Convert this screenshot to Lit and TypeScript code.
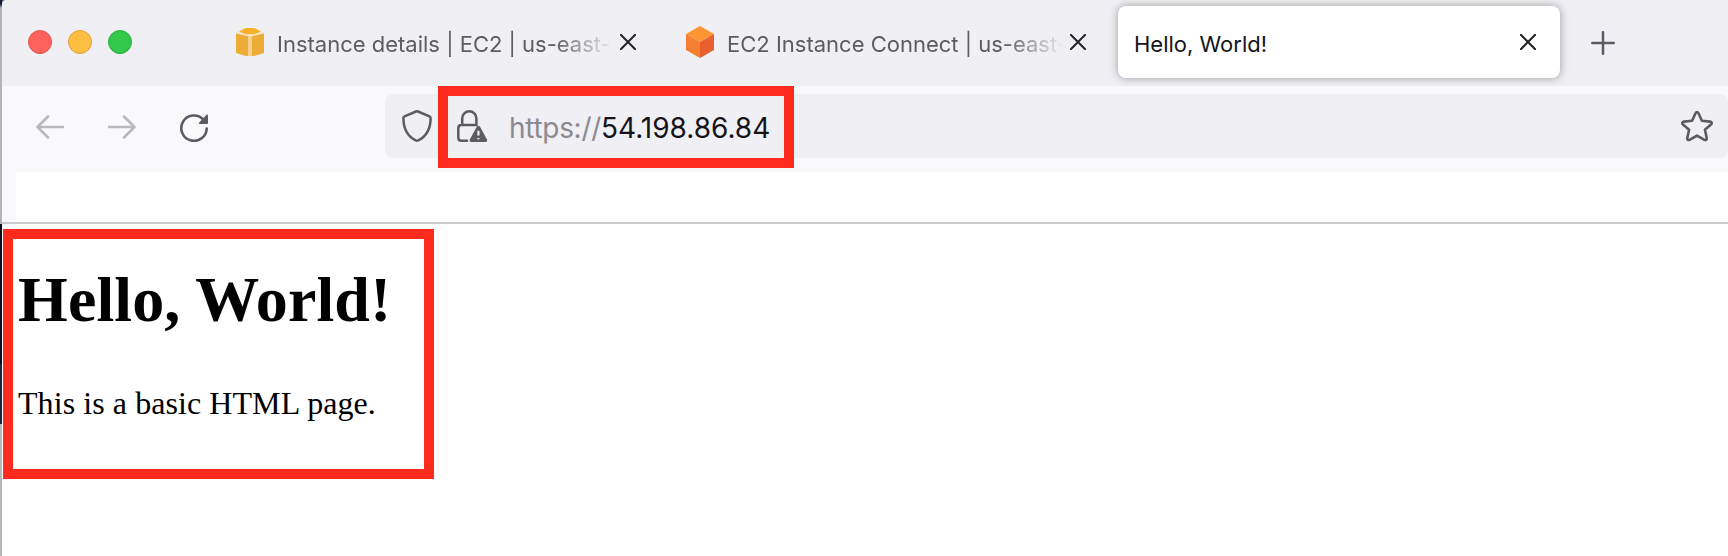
import { LitElement, html, css, svg } from "lit";
import { customElement, property } from "lit/decorators.js";

const ec2Legacy = html`<svg width="28" height="28" viewBox="0 0 28 28">
  <path d="M0 4.500 9 0H19L28 4.500V25L18 28H10L0 25Z" fill="#f5e6ca" />
  <path d="M3 3.600 10 0H18L25 3.600 18 6.200H10Z" fill="#f8b02a" />
  <path d="M0 5.400 12 8.300V28H10L0 25ZM28 5.400 16 8.300V28H18L28 25Z" fill="#edac36" />
  <path d="M12 8.300H16V28H12Z" fill="#f4cf8e" />
</svg>`;

const ec2Cube = html`<svg width="28" height="32" viewBox="0 0 28 32">
  <path d="M14 0 28 8 14 16 0 8Z" fill="#fd9535" />
  <path d="M0 8 14 16V32L0 24Z" fill="#f57f31" />
  <path d="M28 8 14 16V32L28 24Z" fill="#e8602d" />
</svg>`;

const closeIcon = html`<svg width="16" height="16" viewBox="0 0 16 16" fill="none" stroke="#242429" stroke-width="2" stroke-linecap="round">
  <path d="M.8.8 15.200 15.200M15.200.8.8 15.200" />
</svg>`;

const arrow = svg`<path d="M1.500 12H27M12 1.500 1.500 12 12 22.500" />`;

@customElement("browser-tab")
export class BrowserTab extends LitElement {
  @property() label = "";
  @property() icon = "";
  @property({ type: Boolean, reflect: true }) active = false;

  static styles = css`
    :host {
      box-sizing: border-box;
      display: flex;
      align-items: center;
      width: 442px;
      height: 72px;
      margin: 6px 0 0 8px;
      padding: 0 24px 0 16px;
      border-radius: 8px;
      color: #5d5d61;
      font: 22px/30px Inter, sans-serif;
    }
    :host([active]) {
      background: #fff;
      color: #15141a;
      box-shadow: 0 0 8px rgba(80, 80, 90, 0.55);
    }
    .icon {
      display: flex;
      width: 28px;
      margin: 0 13px 0 2px;
    }
    .label {
      flex: 1;
      min-width: 0;
      white-space: nowrap;
      padding-top: 3px;
    }
    .fade {
      margin-right: 6px;
      -webkit-mask-image: linear-gradient(to right, #000 calc(100% - 60px), transparent);
      mask-image: linear-gradient(to right, #000 calc(100% - 60px), transparent);
    }
    .close { display: flex; }
  `;

  render() {
    return html`
      ${this.icon
        ? html`<span class="icon">${this.icon === "cube" ? ec2Cube : ec2Legacy}</span>`
        : null}
      <span class="label ${this.active ? "" : "fade"}">${this.label}</span>
      <span class="close">${closeIcon}</span>
    `;
  }
}

@customElement("app-root")
export class AppRoot extends LitElement {
  static styles = css`
    :host {
      display: flex;
      box-sizing: border-box;
      width: 1728px;
      height: 556px;
      overflow: hidden;
      background: #fff;
    }
    .edge {
      flex: none;
      width: 2px;
      background: linear-gradient(#141d33 0 4px, #b4b4b6 8px 224px, #0c0b16 224px 364px, #22233a 364px 424px, #b7b7b9 424px);
    }
    .window { flex: 1; min-width: 0; display: flex; flex-direction: column; }
    .tabs {
      display: flex;
      align-items: flex-start;
      height: 86px;
      background: radial-gradient(circle at 6px 6px, #f0eff4 6px, #a9abb3 7px, #141d33 8px) 0 0 / 5px 5px no-repeat, #f0eff4;
    }
    .lights { display: flex; gap: 16px; padding: 30px 78px 0 26px; }
    .light {
      box-sizing: border-box;
      width: 24px;
      height: 24px;
      border-radius: 50%;
      border: 1px solid;
    }
    .red { background: #fe625c; border-color: #e2524d; }
    .yellow { background: #fdbe41; border-color: #df9f3a; }
    .green { background: #35c94b; border-color: #28ac38; }
    browser-tab { flex: none; }
    .plus { display: flex; margin: 31px 0 0 31px; }
    .toolbar {
      display: flex;
      align-items: flex-start;
      height: 86px;
      background: #f9f9fb;
    }
    .nav { display: flex; gap: 44px; padding: 28px 0 0 34px; width: 349px; }
    .nav svg { display: block; margin-top: 1px; }
    .nav .reload { margin-top: 0; }
    .address {
      flex: 1;
      display: flex;
      align-items: flex-start;
      height: 64px;
      margin-top: 8px;
      background: #f0eff4;
      border-radius: 8px;
    }
    .shield { display: flex; margin: 16px 0 0 17px; }
    .marked {
      box-sizing: border-box;
      display: flex;
      width: 356px;
      height: 82px;
      margin: -8px 0 0 6px;
      padding: 14px 0 0 9px;
      border: 10px solid #fd2b1e;
    }
    .url {
      margin-left: 21px;
      font: 28px/36px Inter, sans-serif;
      color: #15141a;
      white-space: nowrap;
    }
    .scheme { color: #8b8a90; letter-spacing: -0.3px; }
    .star { display: flex; margin: 16px 15px 0 auto; }
    .strip {
      height: 50px;
      background: linear-gradient(to right, #f9f9fb 14px, #fff 14px);
      border-bottom: 2px solid #ccc;
    }
    .page {
      box-sizing: border-box;
      width: 431px;
      height: 250px;
      margin: 5px 0 0 1px;
      padding: 24px 0 0 5px;
      border: 10px solid #fd2b1e;
      font-family: "Liberation Serif", serif;
      color: #000;
      white-space: nowrap;
    }
    h1 { margin: 0; font-size: 64px; line-height: 74px; letter-spacing: 0.1px; }
    p { margin: 48px 0 0; font-size: 32px; line-height: 36px; letter-spacing: 0.07px; }
  `;

  render() {
    return html`
      <div class="edge"></div>
      <div class="window">
        <div class="tabs">
          <div class="lights">
            <span class="light red"></span>
            <span class="light yellow"></span>
            <span class="light green"></span>
          </div>
          <browser-tab icon="legacy" label="Instance details | EC2 | us-east-"></browser-tab>
          <browser-tab icon="cube" label="EC2 Instance Connect | us-east-"></browser-tab>
          <browser-tab active label="Hello, World!"></browser-tab>
          <span class="plus">
            <svg width="24" height="24" viewBox="0 0 24 24" fill="none" stroke="#5b5b66" stroke-width="2.500" stroke-linecap="round"><path d="M12 1.300V22.700M1.300 12H22.700" /></svg>
          </span>
        </div>
        <div class="toolbar">
          <div class="nav">
            <svg width="28" height="24" viewBox="0 0 28 24" fill="none" stroke="#bababd" stroke-width="2.600" stroke-linecap="round" stroke-linejoin="round">${arrow}</svg>
            <svg width="28" height="24" viewBox="0 0 28 24" fill="none" stroke="#bababd" stroke-width="2.600" stroke-linecap="round" stroke-linejoin="round"><g transform="matrix(-1 0 0 1 28 0)">${arrow}</g></svg>
            <svg class="reload" width="28" height="28" viewBox="0 0 28 28">
              <path d="M23 5.200A12.700 12.700 0 1 0 26.700 14.500" fill="none" stroke="#5b5b66" stroke-width="2.600" stroke-linecap="round" />
              <path d="M26.800.6Q28 .2 28 1.500V9Q28 10 27 10H19.600Q18.200 9.700 19.200 8.400Z" fill="#5b5b66" />
            </svg>
          </div>
          <div class="address">
            <span class="shield">
              <svg width="30" height="32" viewBox="0 0 30 32" fill="none" stroke="#5b5b60" stroke-width="2.500" stroke-linejoin="round"><path d="M14 1.500Q15 1.100 16 1.500L27.500 6.300Q28.600 6.800 28.600 8C28.600 18 24.500 26.400 16.200 30.400Q15 30.900 13.800 30.400C5.500 26.400 1.400 18 1.400 8Q1.400 6.800 2.500 6.300Z" /></svg>
            </span>
            <div class="marked">
              <svg width="31" height="32" viewBox="0 0 31 32">
                <path d="M5.200 15V8.400A7.100 7.100 0 0 1 19.400 8.400V15M19.700 15.100H4.300Q1.300 15.100 1.300 18.200V27.700Q1.300 30.700 4.300 30.700H10" fill="none" stroke="#5b5b60" stroke-width="2.500" stroke-linecap="round" />
                <path d="M19.800 16.800Q21.400 14.900 23 16.800L30 29.500Q30.800 31.800 28.400 32H14.400Q12 31.800 12.800 29.500Z" fill="#5b5b60" />
                <path d="M21.400 20.800V25.500M21.400 28V29.200" stroke="#f0eff4" stroke-width="2.200" />
              </svg>
              <span class="url"><span class="scheme">https://</span>54.198.86.84</span>
            </div>
            <span class="star">
              <svg width="32" height="32" viewBox="0 0 32 32" fill="none" stroke="#5b5b60" stroke-width="2.600" stroke-linejoin="round"><path d="M14.500 3.300Q16 .8 17.500 3.300L20.900 10.700L29 11.600Q31.800 12.300 30 14.600L23.900 19.800L25.700 27.800Q25.900 30.900 23 29.700L16 25.600L9 29.700Q6.100 30.900 6.300 27.800L8.100 19.800L2 14.600Q.2 12.300 3 11.600L11.100 10.700Z" /></svg>
            </span>
          </div>
        </div>
        <div class="strip"></div>
        <div class="page">
          <h1>Hello, World!</h1>
          <p>This is a basic HTML page.</p>
        </div>
      </div>
    `;
  }
}
